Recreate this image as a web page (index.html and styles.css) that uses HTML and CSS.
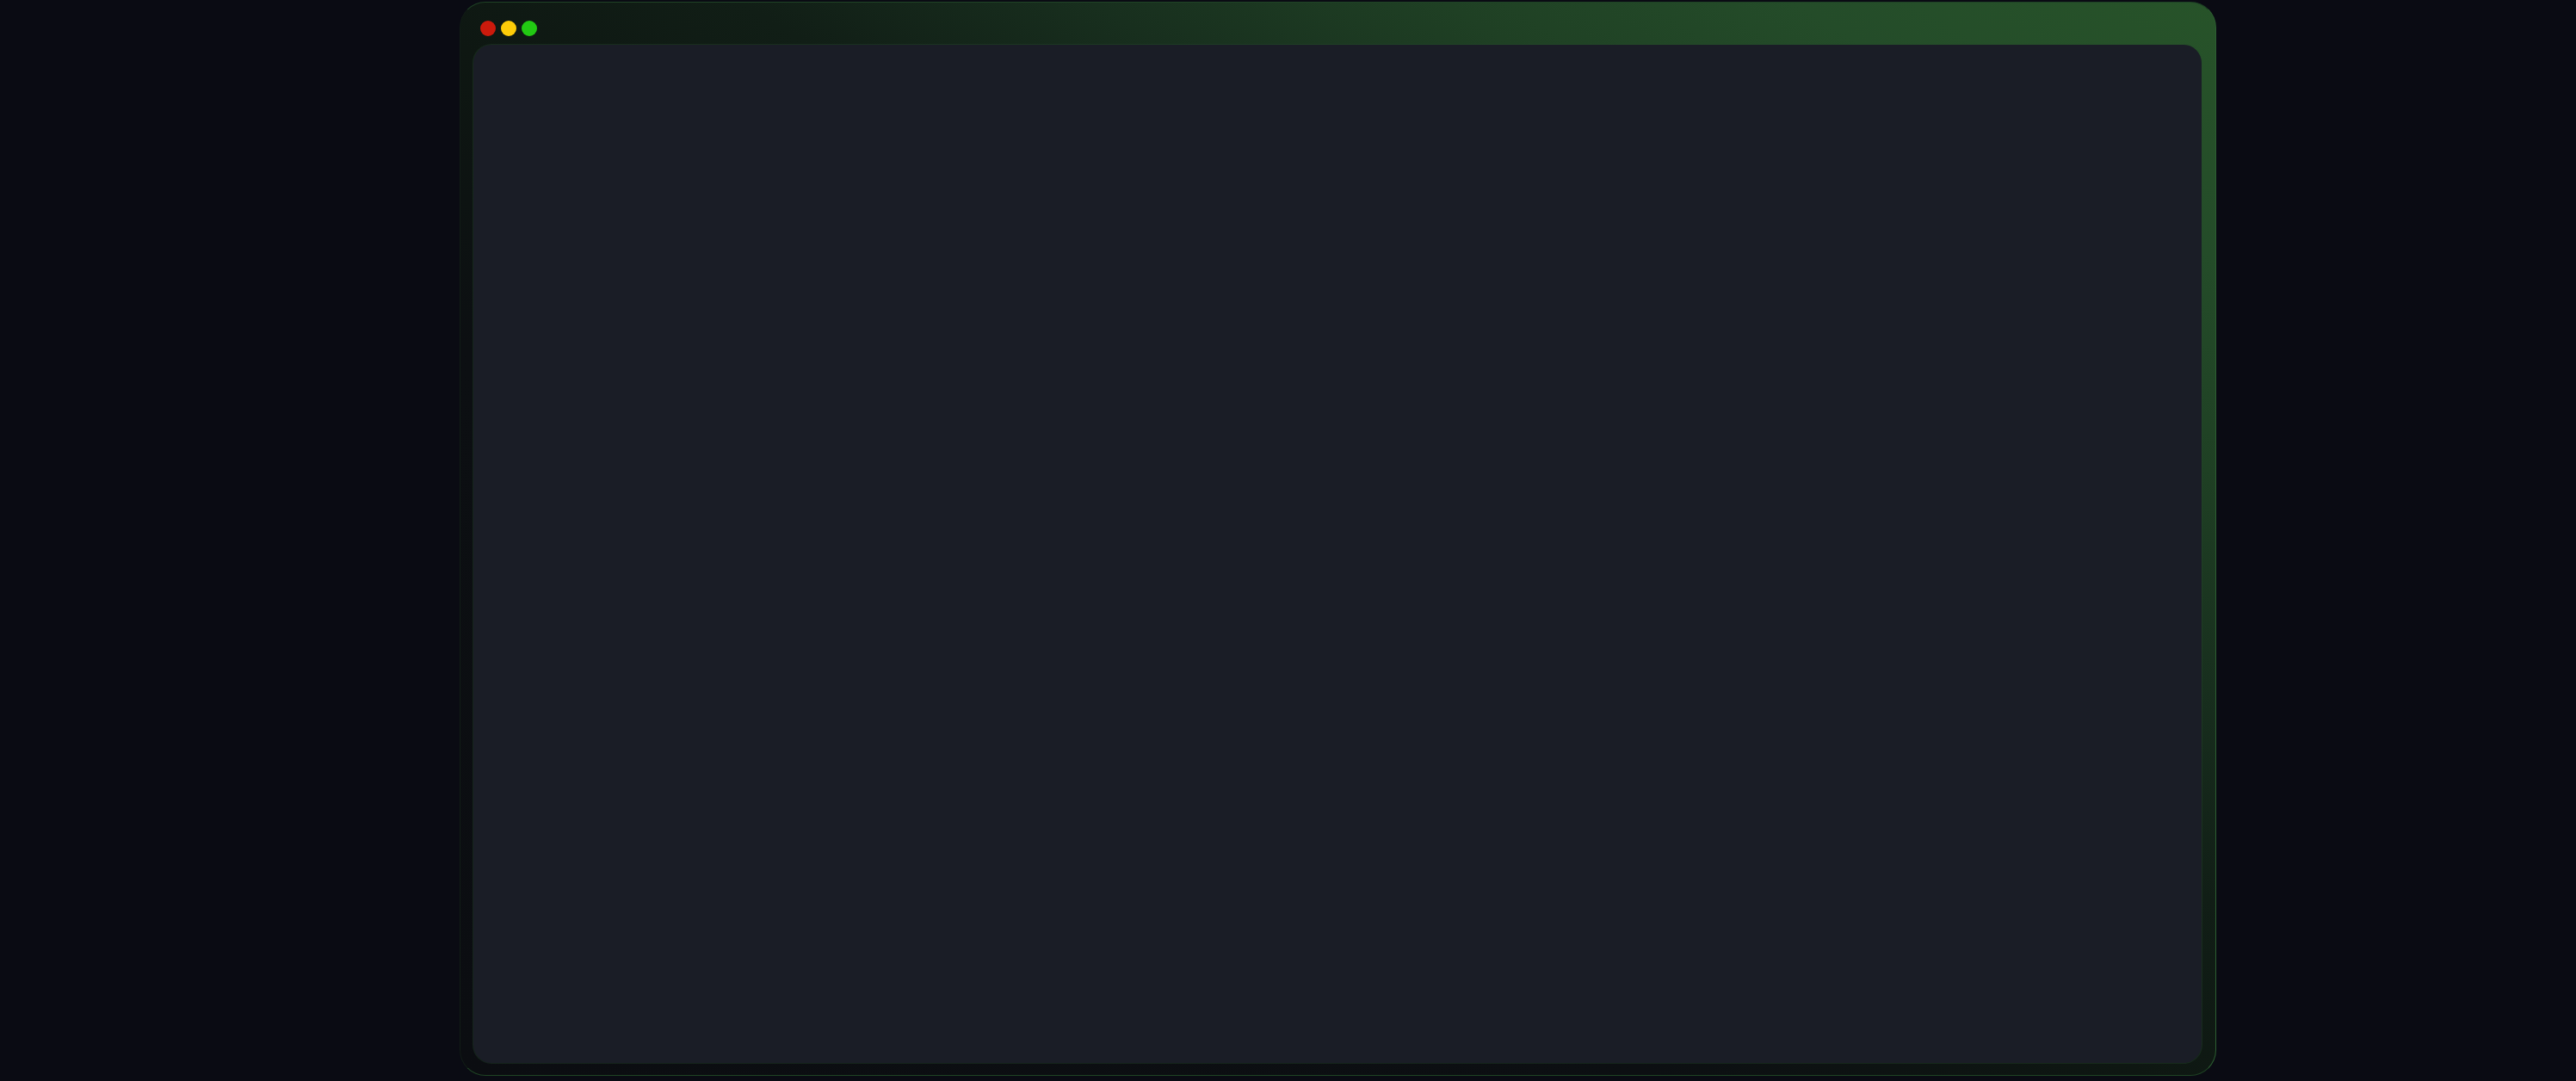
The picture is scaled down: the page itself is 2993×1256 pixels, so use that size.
FILE: index.html
```html
<!DOCTYPE html>
<html lang="en">
<head>
    <meta charset="UTF-8">
    <meta name="viewport" content="width=device-width, initial-scale=1.0">
    <title>Window</title>
    <link rel="stylesheet" href="styles.css">
</head>
<body>
    <div class="stage">
        <div class="window">
            <div class="titlebar">
                <span class="dot red"></span>
                <span class="dot yellow"></span>
                <span class="dot green"></span>
            </div>
            <div class="panel"></div>
        </div>
    </div>
</body>
</html>
```

FILE: styles.css
```css
html, body {
    margin: 0;
    padding: 0;
    height: 100%;
    background-color: #0a0b13;
    font-family: "Liberation Sans", Arial, sans-serif;
}
.stage {
    height: 1256px;
    display: flex;
    justify-content: center;
    padding-top: 2px;
    box-sizing: border-box;
}
.window {
    width: 2041px;
    height: 1248px;
    margin-left: 116px;
    box-sizing: border-box;
    border-radius: 30px;
    border: 1px solid #111c16;
    border-top-color: #1f4225;
    border-right-color: #2c5e31;
    border-bottom-color: #1f4424;
    background: linear-gradient(to bottom left, #275329 0%, #244c29 12%, #1f4024 22%, #182f1e 32%, #111e16 42%, #0e1712 52%, #0c0f12 66%, #0b0d11 100%);
    display: flex;
    flex-direction: column;
    padding: 0 16px 14px 15px;
}
.titlebar {
    height: 49px;
    display: flex;
    align-items: flex-start;
    gap: 6px;
    padding-left: 8px;
    padding-top: 21px;
    box-sizing: border-box;
}
.dot {
    width: 18px;
    height: 18px;
    border-radius: 50%;
}
.red { background-color: #cc1a0c; }
.yellow { background-color: #fdcc08; }
.green { background-color: #22c913; }
.panel {
    flex: 1;
    background-color: #1a1d26;
    border-radius: 21px;
    box-shadow: 0 0 0 1px rgba(40, 80, 45, 0.35);
}
```
